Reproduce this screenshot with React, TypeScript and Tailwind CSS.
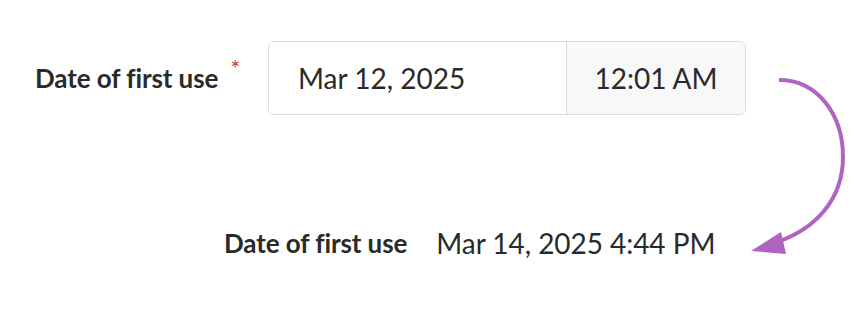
import React from "react";

export default function App() {
  return (
    <div
      className="relative w-[868px] h-[316px] bg-white text-[#2a2a2a]"
      style={{ fontFamily: "Lato, 'Open Sans', sans-serif" }}
    >
      <div className="flex items-center pt-[41px] pl-[35px]">
        <div className="flex items-start w-[233px]">
          <span className="text-[26px] font-bold leading-none tracking-[-0.1px]">Date of first use</span>
          <span className="ml-[12px] -mt-[9px] text-[24px] leading-none text-[#d93a3a]">*</span>
        </div>
        <div className="flex h-[74px] w-[478px] rounded-[6px] border border-[#dcdcdc] overflow-hidden">
          <div className="flex items-center w-[297px] pl-[29px] bg-white text-[28px]">Mar 12, 2025</div>
          <div className="flex flex-1 items-center justify-center border-l border-[#dcdcdc] bg-[#f8f8f8] text-[28px]">12:01 AM</div>
        </div>
      </div>
      <div className="flex items-center pt-[114px] pl-[224px]">
        <span className="text-[26px] font-bold leading-none tracking-[-0.1px]">Date of first use</span>
        <span className="ml-[29px] text-[28px] leading-none tracking-[-0.05px]">Mar 14, 2025 4:44 PM</span>
      </div>
      <svg
        className="absolute left-0 top-0"
        width="868"
        height="316"
        viewBox="0 0 868 316"
        fill="none"
      >
        <path
          d="M779 80 C 818 80, 843 115, 843 157 C 843 200, 815 228, 780 241"
          stroke="#b163c3"
          strokeWidth="4"
          strokeLinecap="butt"
        />
        <polygon points="751,251 781,232 786,254" fill="#b163c3" />
      </svg>
    </div>
  );
}
